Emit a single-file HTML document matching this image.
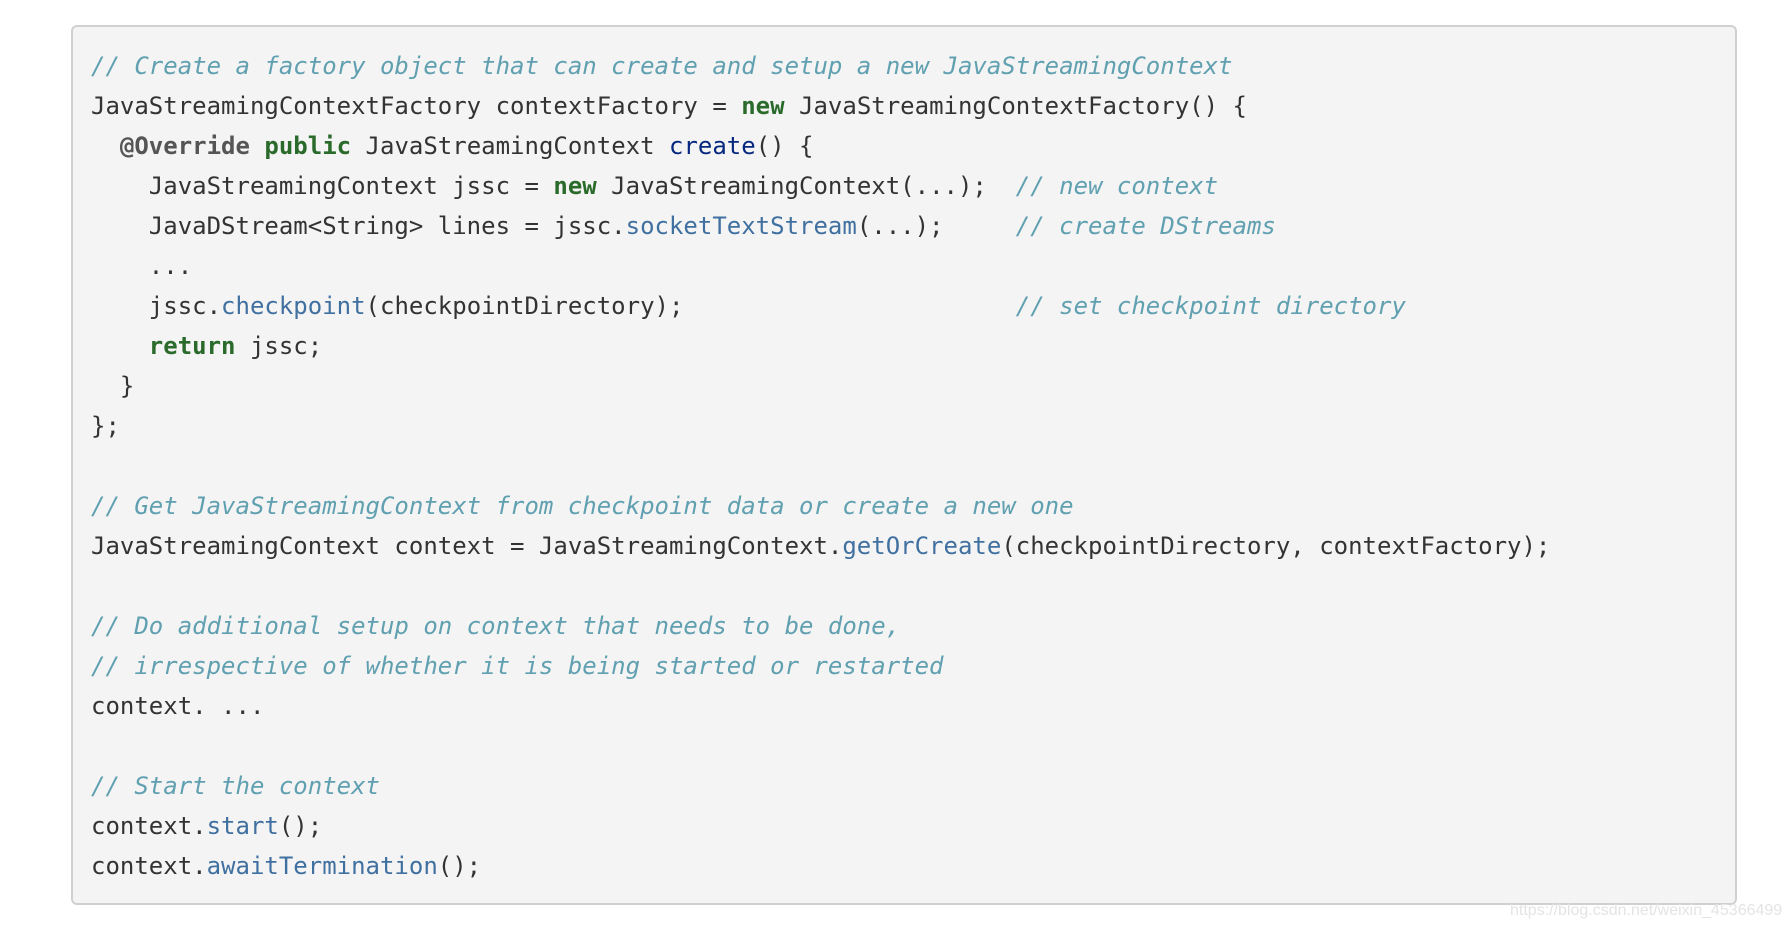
<!DOCTYPE html>
<html><head><style>
body{margin:0;background:#fff;width:1790px;height:928px;position:relative;overflow:hidden}
pre{position:absolute;left:71px;top:25px;width:1666px;height:880px;box-sizing:border-box;margin:0;background:#f4f4f4;border:2px solid #d0d0d0;border-radius:6px;padding:19px 0 0 18px;font-family:"DejaVu Sans Mono","Liberation Mono",monospace;font-size:24px;line-height:40px;color:#333}
.c{color:#60a0b0;font-style:italic}
.k{color:#2a6a2a;font-weight:bold}
.m{color:#4070a0}
.f{color:#06287e}
.a{color:#555;font-weight:bold}
.w{position:absolute;left:1510px;top:902px;font:16px "Liberation Sans",sans-serif;color:#e4e4e4}
</style></head><body>
<pre><span class="c">// Create a factory object that can create and setup a new JavaStreamingContext</span>
JavaStreamingContextFactory contextFactory = <span class="k">new</span> JavaStreamingContextFactory() {
  <span class="a">@Override</span> <span class="k">public</span> JavaStreamingContext <span class="f">create</span>() {
    JavaStreamingContext jssc = <span class="k">new</span> JavaStreamingContext(...);  <span class="c">// new context</span>
    JavaDStream&lt;String&gt; lines = jssc.<span class="m">socketTextStream</span>(...);     <span class="c">// create DStreams</span>
    ...
    jssc.<span class="m">checkpoint</span>(checkpointDirectory);                       <span class="c">// set checkpoint directory</span>
    <span class="k">return</span> jssc;
  }
};

<span class="c">// Get JavaStreamingContext from checkpoint data or create a new one</span>
JavaStreamingContext context = JavaStreamingContext.<span class="m">getOrCreate</span>(checkpointDirectory, contextFactory);

<span class="c">// Do additional setup on context that needs to be done,</span>
<span class="c">// irrespective of whether it is being started or restarted</span>
context. ...

<span class="c">// Start the context</span>
context.<span class="m">start</span>();
context.<span class="m">awaitTermination</span>();</pre>
<div class="w">https://blog.csdn.net/weixin_45366499</div>
</body></html>
